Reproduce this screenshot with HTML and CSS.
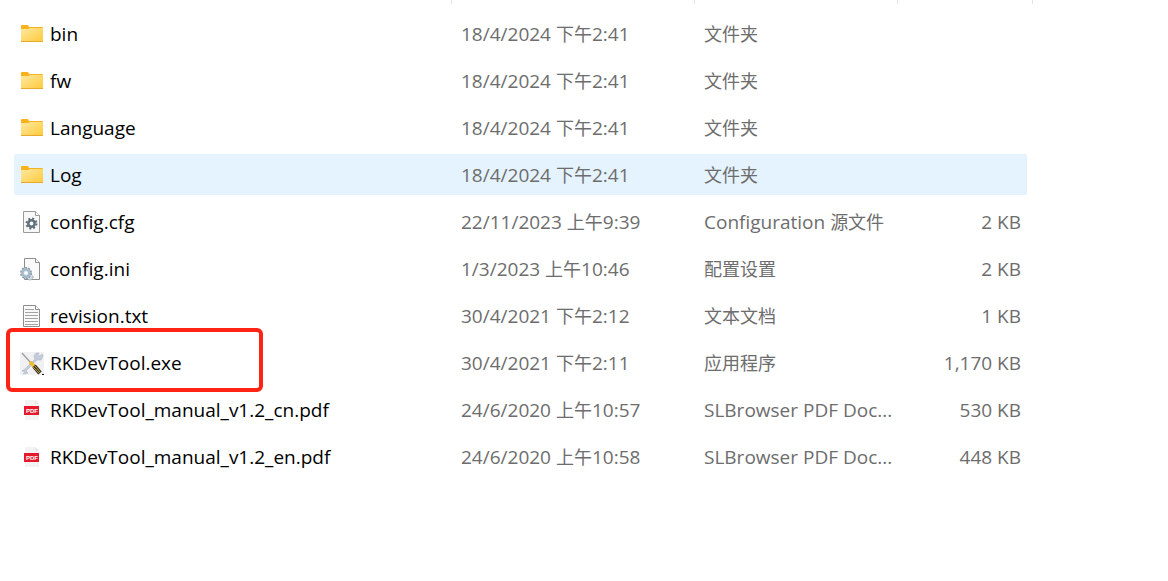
FILE: index.html
```html
<!DOCTYPE html>
<html lang="zh-CN">
<head>
    <meta charset="UTF-8">
    <meta name="viewport" content="width=device-width, initial-scale=1.0">
    <title>RKDevTool</title>
    <link rel="stylesheet" href="styles.css">
</head>
<body>

<!-- icons used in the list -->
<svg class="icon-defs" width="0" height="0">
    <defs>
        <linearGradient id="folderFill" x1="0" y1="0" x2="1" y2="1">
            <stop offset="0" stop-color="#ffe8a0"/>
            <stop offset="1" stop-color="#ffca3a"/>
        </linearGradient>
        <symbol id="folder" viewBox="0 0 24 24">
            <path d="M1 4q0-1 1-1h6l1 2h13q1 0 1 1v3H1z" fill="#f7b21c"/>
            <path d="M1 7h7l2-1h13v13q0 1-1 1H2q-1 0-1-1z" fill="url(#folderFill)"/>
            <path d="M1 19.500h22" stroke="#eba92b"/>
        </symbol>
        <symbol id="cfg" viewBox="0 0 24 24">
            <path d="M3.500 1.500h12l4 4v17h-16z" fill="#f7f7f7" stroke="#9a9a9a"/>
            <path d="M15.500 1.500v4h4" fill="#fff" stroke="#9a9a9a"/>
            <circle cx="11.500" cy="13.500" r="5" fill="none" stroke="#607079" stroke-width="2" stroke-dasharray="2 1.930"/>
            <circle cx="11.500" cy="13.500" r="3.200" fill="none" stroke="#607079" stroke-width="2.500"/>
        </symbol>
        <symbol id="ini" viewBox="0 0 24 24">
            <path d="M4.500 1.500h11l4 4v17h-15z" fill="#fafafa" stroke="#8e8e8e"/>
            <path d="M15.500 1.500v4h4" fill="#fff" stroke="#8e8e8e"/>
            <circle cx="10" cy="20" r="3" fill="#d5dee6" stroke="#8ea3b3" stroke-dasharray="1.500 1"/>
            <circle cx="6" cy="16" r="5.200" fill="#c9d5df" stroke="#8199aa" stroke-width="1.500" stroke-dasharray="2 1.270"/>
            <circle cx="6" cy="16" r="3.500" fill="none" stroke="#a5b9c8" stroke-width="2"/>
            <circle cx="6" cy="16" r="1.800" fill="#fff"/>
        </symbol>
        <symbol id="txt" viewBox="0 0 24 24">
            <path d="M3.500 1.500h12l4 4v17h-16z" fill="#fafafa" stroke="#8e8e8e"/>
            <path d="M15.500 1.500v4h4" fill="#fff" stroke="#8e8e8e"/>
            <path d="M5 5.500h9M5 8.500h13M5 11.500h13M5 14.500h13M5 17.500h13M5 20.500h13" stroke="#a4a4a4"/>
        </symbol>
        <symbol id="tools" viewBox="0 0 24 24">
            <path d="M0 1h24v23H0z" fill="#f1f1f3"/>
            <path d="M3 23l5-1-2-2L17 9l4 0 2-4-1-2-2 2-2-1 1-2-3 0-2 3 1 3L5 18l-3 2 3 1z" fill="#c3ccd8" stroke="#aeb8c6" stroke-width=".6"/>
            <path d="M2 2l9 10" stroke="#9d9d9b" stroke-width="1.300"/>
            <path d="M10 11l5 5" stroke="#efbd2b" stroke-width="3.500"/>
            <path d="M14 15l6 7" stroke="#37352c" stroke-width="4.500"/>
            <path d="M13 16l6 6M15 15l5 6" stroke="#c59b31"/>
            <path d="M22 23h2v1h-2z" fill="#111"/>
        </symbol>
        <symbol id="pdf" viewBox="0 0 24 24">
            <path d="M5 2h10l4 4v16H5z" fill="#f3f3f3"/>
            <path d="M15 2l4 4h-4z" fill="#e6e6e6"/>
            <path d="M4 8h15v9H4z" fill="#e5192b"/>
            <text class="pdf-label" x="12" y="15" text-anchor="middle" fill="#fff">PDF</text>
        </symbol>
    </defs>
</svg>

<div class="column-marks">
    <span></span>
    <span></span>
    <span></span>
    <span></span>
</div>

<table class="files">
    <colgroup>
        <col>
        <col class="col-date">
        <col class="col-type">
        <col class="col-size">
    </colgroup>
    <tbody>
        <tr>
            <td class="name"><svg class="icon"><use href="#folder"/></svg>bin</td>
            <td>18/4/2024 <span class="zh">下午</span>2:41</td>
            <td><span class="zh">文件夹</span></td>
            <td class="size"></td>
        </tr>
        <tr>
            <td class="name"><svg class="icon"><use href="#folder"/></svg>fw</td>
            <td>18/4/2024 <span class="zh">下午</span>2:41</td>
            <td><span class="zh">文件夹</span></td>
            <td class="size"></td>
        </tr>
        <tr>
            <td class="name"><svg class="icon"><use href="#folder"/></svg>Language</td>
            <td>18/4/2024 <span class="zh">下午</span>2:41</td>
            <td><span class="zh">文件夹</span></td>
            <td class="size"></td>
        </tr>
        <tr class="active">
            <td class="name"><svg class="icon"><use href="#folder"/></svg>Log</td>
            <td>18/4/2024 <span class="zh">下午</span>2:41</td>
            <td><span class="zh">文件夹</span></td>
            <td class="size"></td>
        </tr>
        <tr>
            <td class="name"><svg class="icon"><use href="#cfg"/></svg>config.cfg</td>
            <td>22/11/2023 <span class="zh">上午</span>9:39</td>
            <td>Configuration <span class="zh">源文件</span></td>
            <td class="size">2 KB</td>
        </tr>
        <tr>
            <td class="name"><svg class="icon"><use href="#ini"/></svg>config.ini</td>
            <td>1/3/2023 <span class="zh">上午</span>10:46</td>
            <td><span class="zh">配置设置</span></td>
            <td class="size">2 KB</td>
        </tr>
        <tr>
            <td class="name"><svg class="icon"><use href="#txt"/></svg>revision.txt</td>
            <td>30/4/2021 <span class="zh">下午</span>2:12</td>
            <td><span class="zh">文本文档</span></td>
            <td class="size">1 KB</td>
        </tr>
        <tr>
            <td class="name marked"><svg class="icon"><use href="#tools"/></svg>RKDevTool.exe</td>
            <td>30/4/2021 <span class="zh">下午</span>2:11</td>
            <td><span class="zh">应用程序</span></td>
            <td class="size">1,170 KB</td>
        </tr>
        <tr>
            <td class="name"><svg class="icon"><use href="#pdf"/></svg>RKDevTool_manual_v1.2_cn.pdf</td>
            <td>24/6/2020 <span class="zh">上午</span>10:57</td>
            <td>SLBrowser PDF Doc...</td>
            <td class="size">530 KB</td>
        </tr>
        <tr>
            <td class="name"><svg class="icon"><use href="#pdf"/></svg>RKDevTool_manual_v1.2_en.pdf</td>
            <td>24/6/2020 <span class="zh">上午</span>10:58</td>
            <td>SLBrowser PDF Doc...</td>
            <td class="size">448 KB</td>
        </tr>
    </tbody>
</table>

</body>
</html>
```
FILE: styles.css
```css
body {
    margin: 0;
    padding: 0 141px 0 14px;
    background-color: white;
    color: #000000;
    font-family: "Open Sans", "Noto Sans CJK SC", sans-serif;
    font-size: 19px;
    line-height: 25px;
}
.icon-defs {
    position: absolute;
}
/* bottom ends of the header dividers */
.column-marks {
    display: grid;
    grid-template-columns: 1fr 243px 203px 135px;
    height: 4px;
    margin-right: -6px;
}
.column-marks span {
    border-right: 1px solid #e2e2e2;
}
.files {
    width: 100%;
    margin-top: 3px;
    table-layout: fixed;
    border-collapse: separate;
    border-spacing: 0 6px;
}
.col-date {
    width: 243px;
}
.col-type {
    width: 203px;
}
.col-size {
    width: 130px;
}
td {
    height: 41px;
    padding: 2px 0 0 10px;
    box-sizing: border-box;
    color: #6d6d6d;
    white-space: nowrap;
}
.name {
    padding-left: 6px;
    color: #000000;
}
.size {
    padding: 2px 6px 0 0;
    text-align: right;
}
.zh {
    font-size: 18px;
}
.active td {
    background-color: #e5f3ff;
}
.active td:first-child {
    border-radius: 2px 0 0 2px;
}
.active td:last-child {
    border-radius: 0 2px 2px 0;
}
.icon {
    width: 24px;
    height: 24px;
    margin: -4px 6px 0 0;
    vertical-align: middle;
}
.pdf-label {
    font: bold 6px "Liberation Sans", sans-serif;
}
.marked {
    position: relative;
}
/* red frame round the program to start */
.marked::after {
    content: "";
    position: absolute;
    top: -14px;
    left: -8px;
    width: 257px;
    height: 64px;
    box-sizing: border-box;
    border: 4px solid #ff2314;
    border-radius: 6px;
}
```
